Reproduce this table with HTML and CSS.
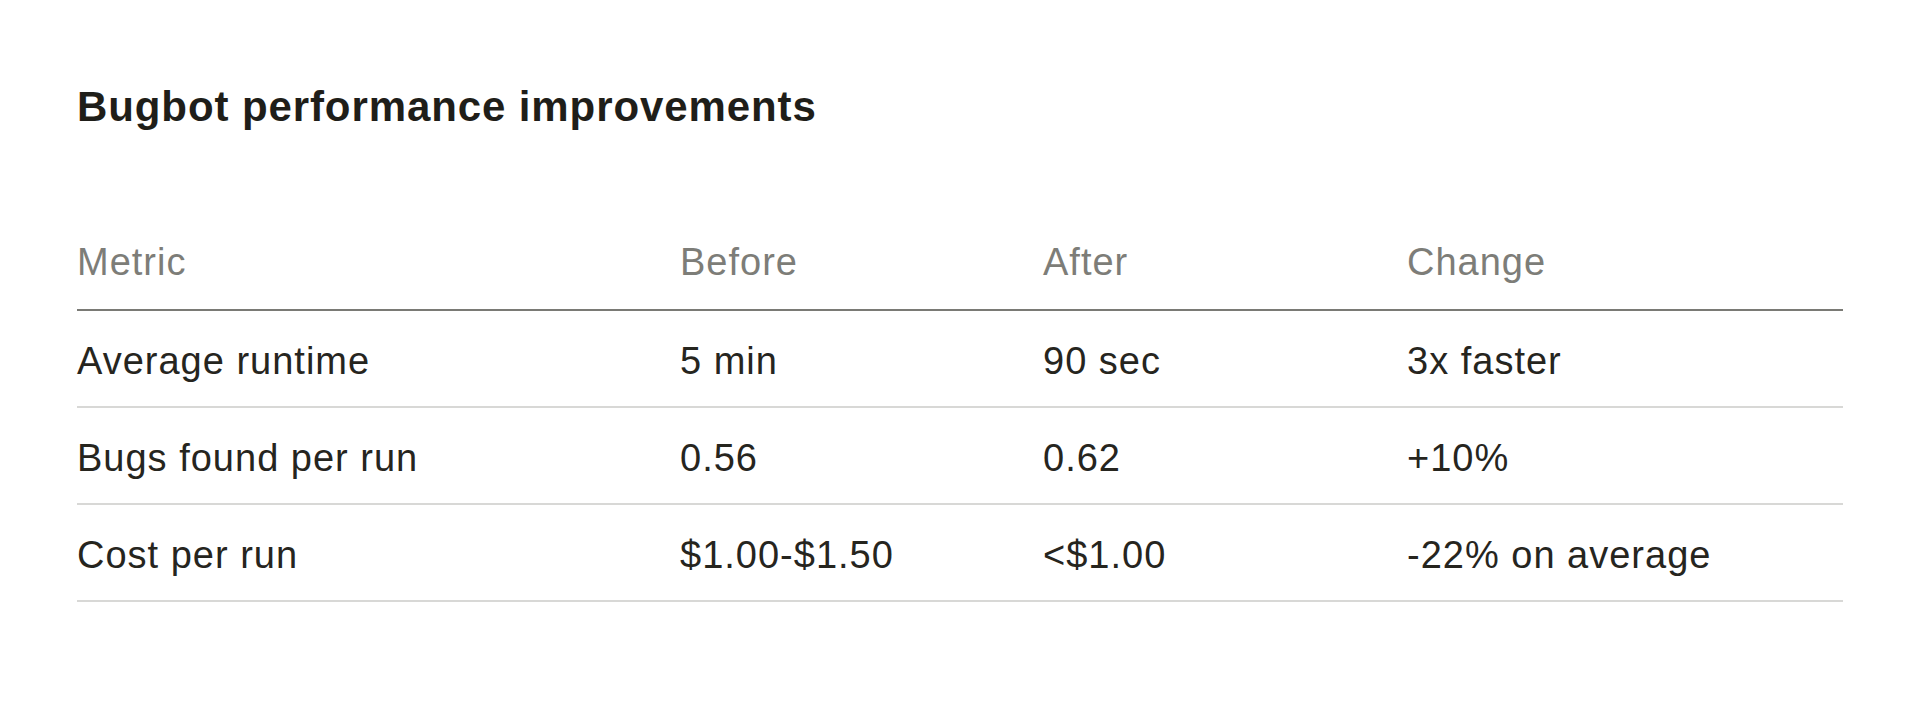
FILE: index.html
```html
<!DOCTYPE html>
<html lang="en">
<head>
    <meta charset="UTF-8">
    <meta name="viewport" content="width=device-width, initial-scale=1.0">
    <title>Bugbot performance improvements</title>
    <link rel="stylesheet" href="styles.css">
</head>
<body>
    <div class="container">
        <h2 class="title">Bugbot performance improvements</h2>

        <table class="perf-table">
            <thead>
                <tr>
                    <th class="col-metric">Metric</th>
                    <th class="col-before">Before</th>
                    <th class="col-after">After</th>
                    <th class="col-change">Change</th>
                </tr>
            </thead>
            <tbody>
                <tr>
                    <td>Average runtime</td>
                    <td>5 min</td>
                    <td>90 sec</td>
                    <td>3x faster</td>
                </tr>
                <tr>
                    <td>Bugs found per run</td>
                    <td>0.56</td>
                    <td>0.62</td>
                    <td>+10%</td>
                </tr>
                <tr>
                    <td>Cost per run</td>
                    <td>$1.00-$1.50</td>
                    <td>&lt;$1.00</td>
                    <td>-22% on average</td>
                </tr>
            </tbody>
        </table>
    </div>
</body>
</html>
```

FILE: styles.css
```css
body {
    font-family: "Liberation Sans", Arial, sans-serif;
    margin: 0;
    background-color: #ffffff;
    color: #26251e;
}

.container {
    padding: 83px 77px 0 77px;
}

.title {
    margin: 0 0 109px 0;
    font-size: 42px;
    line-height: 48px;
    letter-spacing: 0.9px;
    font-weight: 700;
    color: #1f1e19;
}

.perf-table {
    width: 1766px;
    border-collapse: collapse;
    table-layout: fixed;
}

.perf-table th,
.perf-table td {
    padding: 0;
    text-align: left;
    font-size: 38px;
    line-height: 44px;
    letter-spacing: 1px;
}

.perf-table th {
    font-weight: 400;
    color: #7d7d78;
    padding-bottom: 25px;
    border-bottom: 2px solid #7a7a75;
}

.perf-table td {
    padding-top: 28px;
    padding-bottom: 23px;
    border-bottom: 2px solid #d8d8d6;
}

.col-metric { width: 603px; }
.col-before { width: 363px; }
.col-after { width: 364px; }
.col-change { width: 436px; }
```
